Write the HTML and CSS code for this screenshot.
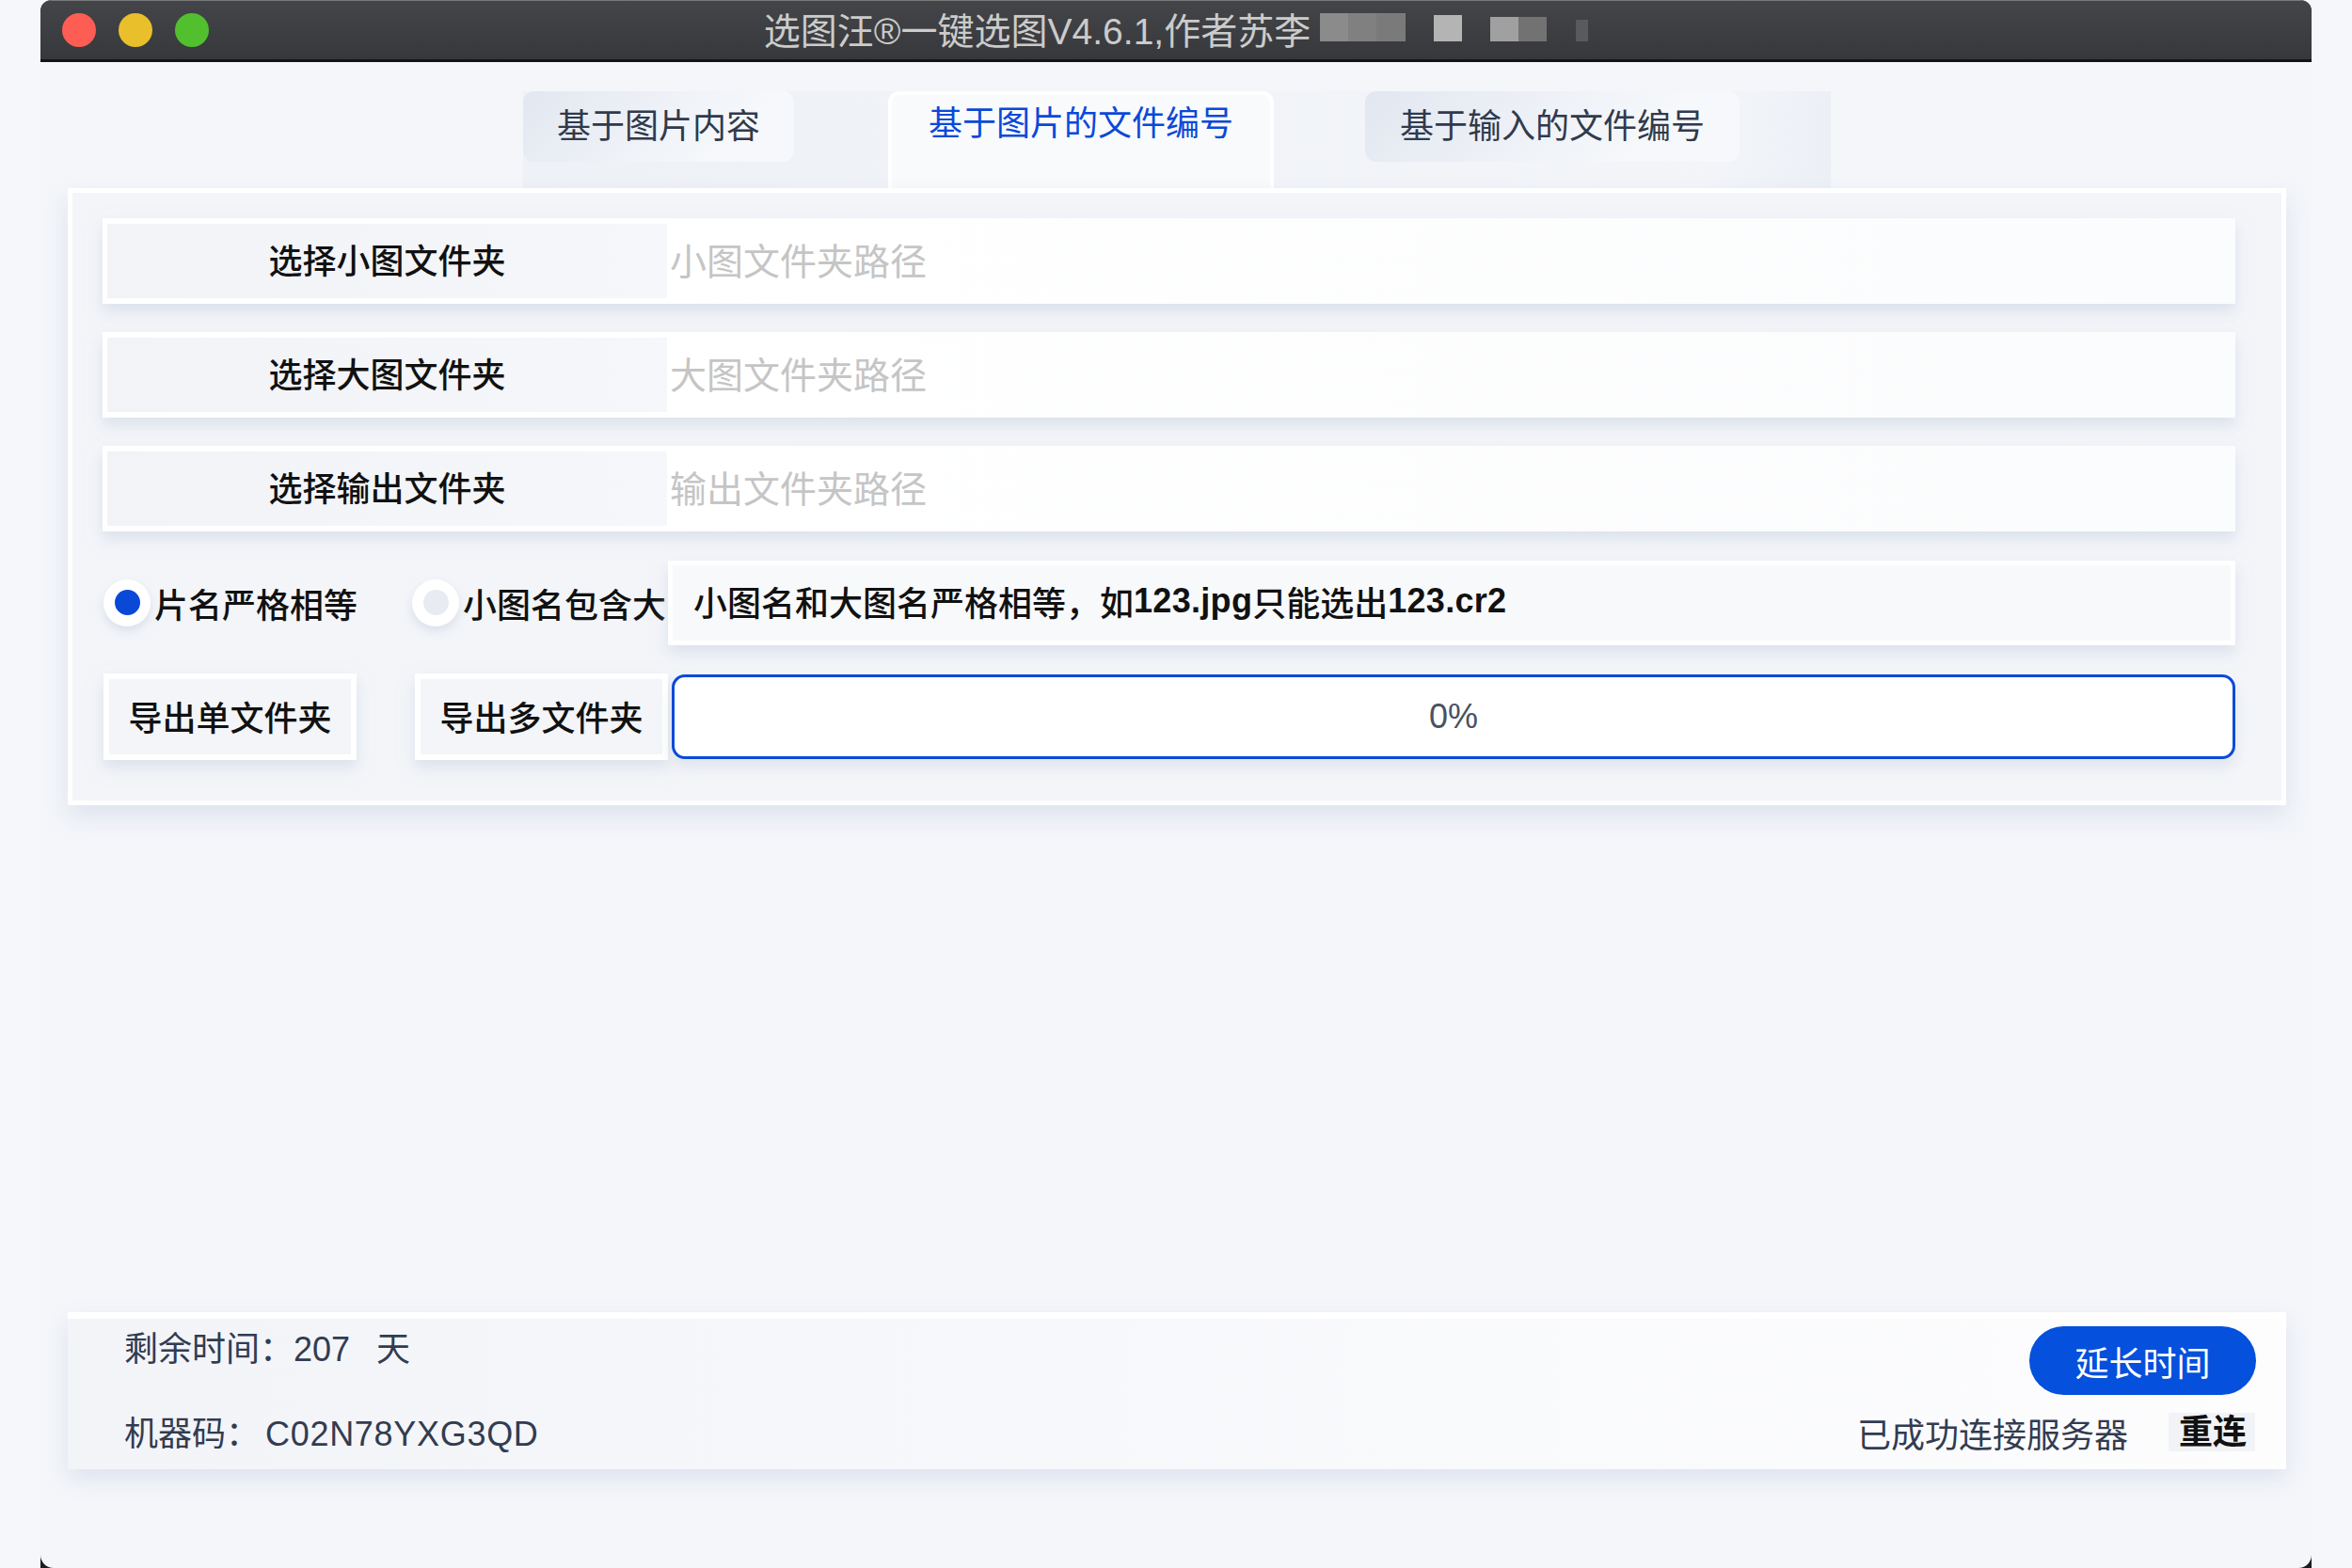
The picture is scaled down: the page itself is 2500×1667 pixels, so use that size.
FILE: index.html
```html
<!DOCTYPE html>
<html lang="zh-CN">
<head>
<meta charset="utf-8">
<title>选图汪</title>
<link rel="stylesheet" href="styles.css">
</head>
<body>
<div class="window">
  <div class="titlebar">
    <div class="lights">
      <span class="light red"></span>
      <span class="light yellow"></span>
      <span class="light green"></span>
    </div>
    <div class="title">
      <span class="title-text">选图汪®一键选图V4.6.1,作者苏李</span>
      <span class="redact">
        <span class="blk a"></span>
        <span class="blk b"></span>
        <span class="blk c"></span>
        <span class="blk d"></span>
      </span>
    </div>
    <div></div>
  </div>
  <div class="content">
    <div class="tabbar">
      <div class="tab">基于图片内容</div>
      <div class="tab active">基于图片的文件编号</div>
      <div class="tab">基于输入的文件编号</div>
    </div>
    <div class="panel">
      <div class="row path-row">
        <div class="pick">选择小图文件夹</div>
        <div class="path">小图文件夹路径</div>
      </div>
      <div class="row path-row">
        <div class="pick">选择大图文件夹</div>
        <div class="path">大图文件夹路径</div>
      </div>
      <div class="row path-row">
        <div class="pick">选择输出文件夹</div>
        <div class="path">输出文件夹路径</div>
      </div>
      <div class="mode-row">
        <div class="radio">
          <span class="circle"><span class="dot on"></span></span>
          <span class="radio-label">片名严格相等</span>
        </div>
        <div class="radio second">
          <span class="circle"><span class="dot"></span></span>
          <span class="radio-label">小图名包含大</span>
        </div>
        <div class="desc">小图名和大图名严格相等，如<span class="latin">123.jpg</span>只能选出<span class="latin">123.cr2</span></div>
      </div>
      <div class="export-row">
        <div class="export">导出单文件夹</div>
        <div class="export second">导出多文件夹</div>
        <div class="progress">0%</div>
      </div>
    </div>
    <div class="footer">
      <div class="info">
        <div class="info-line">剩余时间：207<span class="unit">天</span></div>
        <div class="info-line second">机器码：<span class="code">C02N78YXG3QD</span></div>
      </div>
      <div class="actions">
        <div class="extend">延长时间</div>
        <div class="status">
          <span class="status-text">已成功连接服务器</span>
          <span class="reconnect">重连</span>
        </div>
      </div>
    </div>
  </div>
</div>
</body>
</html>
```
FILE: styles.css
```css
* { box-sizing: border-box; }
html, body { margin: 0; padding: 0; }
body {
  background: #f6f7fb;
  font-family: "Liberation Sans", "Noto Sans CJK SC", sans-serif;
  overflow: hidden;
  height: 1667px;
}
.window {
  margin: 0 43px;
  height: 1667px;
  background: #1b1b1d;
  border-radius: 12px 12px 0 0;
  overflow: hidden;
  display: flex;
  flex-direction: column;
}
.titlebar {
  height: 66px;
  flex: none;
  display: grid;
  grid-template-columns: 1fr auto 1fr;
  align-items: center;
  background: linear-gradient(#444548, #37383b);
  border-top: 1px solid #77787a;
  border-bottom: 3px solid #141414;
}
.lights { display: flex; gap: 24px; margin-left: 23px; }
.light { width: 36px; height: 36px; border-radius: 50%; display: block; }
.red { background: #fd5d53; }
.yellow { background: #e9bf2b; }
.green { background: #52c02e; }
.title {
  display: flex;
  align-items: center;
  color: #cbcbcb;
  font-size: 39px;
  line-height: 50px;
  padding-top: 3px;
  white-space: nowrap;
}
.redact {
  display: flex;
  align-items: flex-end;
  height: 30px;
  margin: 0 0 10px 10px;
}
.blk { display: block; }
.blk.a { width: 91px; height: 30px; background: linear-gradient(90deg, #8b8b8b 0 33%, #808080 33% 66%, #7a7a7a 66%); }
.blk.b { width: 30px; height: 28px; margin-left: 30px; background: #b4b4b4; }
.blk.c { width: 60px; height: 26px; margin-left: 30px; background: linear-gradient(90deg, #a0a0a0 0 50%, #727272 50%); }
.blk.d { width: 13px; height: 23px; margin-left: 31px; background: #5a5a5c; }

.content {
  flex: 1;
  background: #f4f6fa;
  border-radius: 0 0 14px 14px;
  display: flex;
  flex-direction: column;
  padding: 0 27px 105px 29px;
}
.tabbar {
  margin: 31px auto 0;
  width: 1390px;
  height: 103px;
  display: flex;
  align-items: flex-start;
  gap: 100px;
  padding-right: 97px;
  background: linear-gradient(90deg, #eef1f6, #f3f5f9 90%, #ecf0f6);
  font-size: 36px;
  color: #303a4d;
}
.tab {
  width: 288px;
  height: 75px;
  line-height: 75px;
  text-align: center;
  border-radius: 12px;
  background: linear-gradient(135deg, #e2e7f0, #f6f8fb 75%);
  white-space: nowrap;
}
.tab.active {
  width: 410px;
  height: 103px;
  line-height: 62px;
  border: 4px solid #fff;
  border-bottom: 0;
  border-radius: 12px 12px 0 0;
  background: #f9fafc;
  color: #0a49d8;
}
.tab.active + .tab { margin-left: -3px; width: 398px; }

.panel {
  background: #f3f5f9;
  border: 5px solid #fff;
  box-shadow: 0 12px 24px rgba(196, 205, 222, 0.45);
  padding: 27px 49px 43px 32px;
  display: flex;
  flex-direction: column;
  gap: 30px;
}
.row {
  height: 91px;
  display: flex;
  background: #fff;
  box-shadow: 0 8px 14px rgba(200, 209, 224, 0.55);
}
.pick {
  width: 595px;
  margin: 6px 0 6px 5px;
  padding-bottom: 5px;
  background: linear-gradient(90deg, #f1f3f7, #f5f7fa);
  font-size: 36px;
  font-weight: 500;
  color: #111;
  display: flex;
  align-items: center;
  justify-content: center;
}
.path {
  flex: 1;
  padding: 0 0 5px 3px;
  font-size: 39px;
  color: #c5c5c5;
  display: flex;
  align-items: center;
  background: linear-gradient(90deg, #fff, #fbfcfd);
}
.mode-row {
  height: 91px;
  display: flex;
  align-items: center;
  font-size: 36px;
  font-weight: 500;
  color: #111;
}
.radio { display: flex; align-items: center; margin-left: 1px; }
.radio.second { margin-left: 58px; }
.circle {
  width: 50px;
  height: 50px;
  border-radius: 50%;
  background: #fff;
  box-shadow: 0 5px 10px rgba(196, 205, 222, 0.5);
  display: flex;
  align-items: center;
  justify-content: center;
}
.dot { width: 27px; height: 27px; border-radius: 50%; background: #e8ebf1; display: block; }
.dot.on { background: #0a48d8; }
.radio-label { margin-left: 4px; white-space: nowrap; }
.desc {
  flex: 1;
  height: 90px;
  margin-left: 2px;
  border: 5px solid #fff;
  background: #f8f9fb;
  padding: 0 0 3px 22px;
  display: flex;
  align-items: center;
  white-space: nowrap;
  box-shadow: 0 8px 14px rgba(200, 209, 224, 0.55);
}
.latin { font-weight: 700; letter-spacing: 0.3px; }
.export-row {
  height: 92px;
  display: flex;
  align-items: center;
}
.export {
  width: 269px;
  height: 92px;
  margin-left: 1px;
  border: 6px solid #fff;
  background: #f3f5f9;
  padding-bottom: 3px;
  font-size: 36px;
  font-weight: 500;
  color: #111;
  display: flex;
  align-items: center;
  justify-content: center;
  box-shadow: 0 8px 14px rgba(200, 209, 224, 0.55);
}
.export.second { margin-left: 62px; }
.progress {
  flex: 1;
  height: 90px;
  margin-left: 4px;
  border: 3px solid #0a4ad8;
  border-radius: 14px;
  background: #fff;
  font-size: 36px;
  color: #4a5262;
  display: flex;
  align-items: center;
  justify-content: center;
  box-shadow: 0 8px 14px rgba(200, 209, 224, 0.45);
}

.footer {
  margin-top: auto;
  height: 167px;
  border-top: 7px solid #fff;
  border-right: 5px solid #fff;
  background: linear-gradient(90deg, #f2f4f8, #fdfdfe);
  box-shadow: 0 10px 22px rgba(196, 205, 222, 0.45);
  display: flex;
  justify-content: space-between;
  padding: 8px 28px 0 60px;
  font-size: 36px;
  color: #323c51;
}
.info-line { height: 50px; line-height: 50px; white-space: nowrap; }
.info-line.second { margin-top: 40px; }
.unit { margin-left: 28px; }
.code { margin-left: 6px; letter-spacing: 0.7px; }
.actions { display: flex; flex-direction: column; align-items: flex-end; }
.extend {
  width: 241px;
  height: 73px;
  border-radius: 37px;
  background: #0550dc;
  color: #fff;
  display: flex;
  align-items: center;
  justify-content: center;
  margin-right: -1px;
}
.status {
  margin-top: 19px;
  height: 41px;
  display: flex;
  align-items: center;
}
.status-text { white-space: nowrap; }
.reconnect {
  margin-left: 43px;
  height: 41px;
  line-height: 41px;
  padding: 0 9px 0 11px;
  background: #f1f3f6;
  color: #111;
  font-weight: 700;
}
```
